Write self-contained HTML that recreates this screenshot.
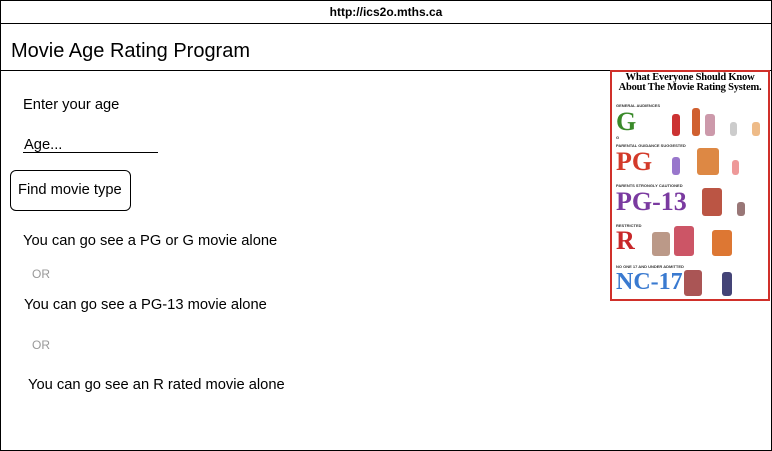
<!DOCTYPE html>
<html><head><style>
body{margin:0;width:772px;height:451px;background:#fff;font-family:"Liberation Sans",sans-serif;position:relative;overflow:hidden}
.a{position:absolute;white-space:nowrap}
.t{font-size:14.7px}
.ln{position:absolute;background:#000;height:1px}
.pt{position:absolute;font-family:"Liberation Serif",serif;font-weight:bold;line-height:1}
.sm{position:absolute;font-size:4px;line-height:1;font-weight:bold;color:#333;font-family:"Liberation Sans",sans-serif}
.f{position:absolute;border-radius:3px}
</style></head><body>
<div style="position:absolute;left:0;top:0;width:770px;height:449px;border:1px solid #000"></div>
<div class="ln" style="left:0;top:23px;width:772px"></div>
<div class="ln" style="left:0;top:70px;width:772px"></div>
<div class="a" style="left:0;width:772px;text-align:center;top:5px;font-size:12px;font-weight:bold">http://ics2o.mths.ca</div>
<div class="a" style="left:11px;top:40px;font-size:20px">Movie Age Rating Program</div>
<div class="a t" style="left:23px;top:97px">Enter your age</div>
<div class="a t" style="left:24px;top:137px">Age...</div>
<div class="ln" style="left:23px;top:152px;width:135px"></div>
<div style="position:absolute;left:10px;top:170px;width:119px;height:39px;border:1px solid #000;border-radius:6px"></div>
<div class="a t" style="left:18px;top:182px">Find movie type</div>
<div class="a t" style="left:23px;top:233px">You can go see a PG or G movie alone</div>
<div class="a" style="left:32px;top:267px;font-size:12px;color:#999">OR</div>
<div class="a t" style="left:24px;top:297px">You can go see a PG-13 movie alone</div>
<div class="a" style="left:32px;top:338px;font-size:12px;color:#999">OR</div>
<div class="a t" style="left:28px;top:377px">You can go see an R rated movie alone</div>

<div style="position:absolute;left:610px;top:70px;width:156px;height:227px;border:2px solid #d0302a;background:#fff;overflow:hidden">
<div class="a" style="left:0;width:156px;text-align:center;top:1px;font-family:'Liberation Serif',serif;font-weight:bold;font-size:10.5px;line-height:10px;letter-spacing:-0.2px">What Everyone Should Know<br>About The Movie Rating System.</div>
<div class="sm" style="left:4px;top:32px">GENERAL AUDIENCES</div>
<div class="pt" style="left:4px;top:37px;font-size:26px;color:#3a8a2a">G</div>
<div class="sm" style="left:4px;top:64px">G</div>
<div class="f" style="left:60px;top:42px;width:8px;height:22px;background:#c33"></div>
<div class="f" style="left:80px;top:36px;width:8px;height:28px;background:#d06030"></div>
<div class="f" style="left:93px;top:42px;width:10px;height:22px;background:#c9a"></div>
<div class="f" style="left:118px;top:50px;width:7px;height:14px;background:#ccc"></div>
<div class="f" style="left:140px;top:50px;width:8px;height:14px;background:#eb8"></div>
<div class="sm" style="left:4px;top:72px">PARENTAL GUIDANCE SUGGESTED</div>
<div class="pt" style="left:4px;top:77px;font-size:26px;color:#d33a2a">PG</div>
<div class="f" style="left:60px;top:85px;width:8px;height:18px;background:#97c"></div>
<div class="f" style="left:85px;top:76px;width:22px;height:27px;background:#d84"></div>
<div class="f" style="left:120px;top:88px;width:7px;height:15px;background:#e99"></div>
<div class="sm" style="left:4px;top:112px">PARENTS STRONGLY CAUTIONED</div>
<div class="pt" style="left:4px;top:117px;font-size:26px;color:#7a3aa0">PG-13</div>
<div class="f" style="left:90px;top:116px;width:20px;height:28px;background:#b54"></div>
<div class="f" style="left:125px;top:130px;width:8px;height:14px;background:#977"></div>
<div class="sm" style="left:4px;top:152px">RESTRICTED</div>
<div class="pt" style="left:4px;top:156px;font-size:26px;color:#c8282a">R</div>
<div class="f" style="left:40px;top:160px;width:18px;height:24px;background:#b98"></div>
<div class="f" style="left:62px;top:154px;width:20px;height:30px;background:#c56"></div>
<div class="f" style="left:100px;top:158px;width:20px;height:26px;background:#d73"></div>
<div class="sm" style="left:4px;top:193px">NO ONE 17 AND UNDER ADMITTED</div>
<div class="pt" style="left:4px;top:198px;font-size:24px;color:#3a7ad0">NC-17</div>
<div class="f" style="left:72px;top:198px;width:18px;height:26px;background:#a55"></div>
<div class="f" style="left:110px;top:200px;width:10px;height:24px;background:#447"></div>
</div>
</body></html>
